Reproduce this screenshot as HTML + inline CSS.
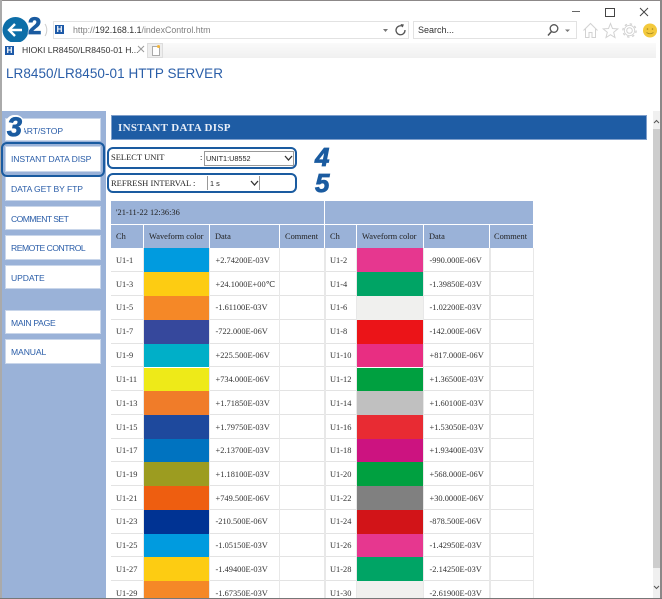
<!DOCTYPE html>
<html><head><meta charset="utf-8"><title>HIOKI LR8450</title>
<style>
html,body{margin:0;padding:0;background:#fff;width:662px;height:599px;overflow:hidden}
#p{position:relative;width:662px;height:599px;overflow:hidden;background:#fff;filter:blur(.25px)}
#p div,#p span.a,#p svg{position:absolute}
.t{font-family:"Liberation Sans",sans-serif;white-space:nowrap}
.s{font-family:"Liberation Serif",serif;white-space:nowrap;font-size:8.4px;color:#333;line-height:12px}
.btn{left:5px;width:96px;background:#fff;border:1px solid #c9d6ea;box-sizing:border-box;font-family:"Liberation Sans",sans-serif;font-size:8.6px;color:#2a5da8;line-height:24px;padding-left:5px;white-space:nowrap;letter-spacing:-.1px}
.row{left:111px;width:422px;height:22.8px;background:#fff;border-bottom:1px solid #e3e3e3}
.row .s{top:6.500px}
.row .c0{left:5px}.row .c1{left:33px;width:65px;top:0;height:23.8px}.row .c2{left:104.500px}
.row .c3{left:219px}.row .c4{left:246px;width:66px;top:0;height:23.8px}.row .c5{left:318.500px}
.vl{top:248px;width:1px;height:350px;background:#e8e8e8}
.h{background:#9ab2d8;height:23px}
.num{font-family:"Liberation Sans",sans-serif;font-weight:bold;font-style:italic;color:#1a5ba0;line-height:1;-webkit-text-stroke:.8px #1a5ba0}
.box{border:2px solid #1a5ba0;border-radius:6px;box-sizing:border-box}
.ic{background:#1e5aa8;width:9px;height:9px;color:#fff;font:bold 8px/9px "Liberation Sans",sans-serif;text-align:center}
</style></head><body><div id="p">
<!-- window frame -->
<div style="left:0;top:0;width:662px;height:1px;background:#8c8888"></div>
<div style="left:0;top:0;width:2px;height:599px;background:#aaa"></div>
<div style="left:660px;top:0;width:2px;height:599px;background:#8c8888"></div>
<div style="left:0;top:598px;width:662px;height:1px;background:#777"></div>

<!-- window controls -->
<div style="left:572px;top:11px;width:8px;height:1px;background:#666"></div>
<div style="left:605px;top:8px;width:8px;height:7px;border:1px solid #444"></div>
<svg style="left:639px;top:7px" width="10" height="10"><path d="M1 1L9 9M9 1L1 9" stroke="#444" stroke-width="1" fill="none"/></svg>

<!-- back + 2 -->
<svg style="left:1px;top:14px" width="50" height="30"><circle cx="14.500" cy="16" r="13" fill="#0d6ea8"/><path d="M8 16H21M14 10L8 16L14 22" stroke="#fff" stroke-width="2.400" fill="none"/><path d="M44 10a11 11 0 0 1 0 12" stroke="#ccc" fill="none"/></svg>
<div class="num" style="left:28px;top:15px;font-size:24px;font-style:normal;text-shadow:-1px 0 #fff,0 -1px #fff,0 1px #fff">2</div>

<!-- address bar -->
<div style="left:53px;top:21px;width:356px;height:18px;border:1px solid #e2e2e2;box-sizing:border-box"></div>
<div class="ic" style="left:55px;top:25px">H</div>
<div class="t" style="left:73px;top:24px;font-size:8.800px;line-height:12px;color:#808080">http://<span style="color:#333">192.168.1.1</span>/indexControl.htm</div>
<svg style="left:382px;top:22px" width="26" height="16"><path d="M1 7h5l-2.500 3z" fill="#777"/><path d="M21 4.500a4.500 4.500 0 1 0 2 3.500" stroke="#555" stroke-width="1.300" fill="none"/><path d="M18.500 2l3.500.5-1.500 3z" fill="#555"/></svg>

<!-- search -->
<div style="left:413px;top:21px;width:164px;height:18px;border:1px solid #e2e2e2;box-sizing:border-box"></div>
<div class="t" style="left:418px;top:24px;font-size:9px;line-height:12px;color:#333">Search...</div>
<svg style="left:546px;top:23px" width="30" height="14"><circle cx="8" cy="5.500" r="3.800" stroke="#555" stroke-width="1.300" fill="none"/><path d="M5.500 8.500L2 12.500" stroke="#555" stroke-width="1.500"/><path d="M19 6.500h5l-2.500 2.500z" fill="#777"/></svg>

<!-- tool icons -->
<svg style="left:582px;top:21px" width="58" height="18" fill="none" stroke="#d2d2d2" stroke-width="1">
<path d="M1.500 9.500L8.500 2.500L15.500 9.500M3.500 8V16.500H7V11.500H10V16.500H13.500V8"/>
<path d="M28.500 2.500l2 5 5.300.4-4.100 3.400 1.300 5.200-4.500-2.800-4.500 2.800 1.300-5.200-4.100-3.400 5.300-.4z"/>
<circle cx="47.500" cy="9.500" r="2.800"/><circle cx="47.500" cy="9.500" r="6.600" stroke-width="1.400" stroke-dasharray="2.400 2.780"/>
<circle cx="47.500" cy="9.500" r="5.200" stroke-width=".8"/>
</svg>
<svg style="left:642px;top:23px" width="16" height="16"><circle cx="8" cy="7.500" r="7" fill="#f3c93c"/><circle cx="5.500" cy="6" r=".8" fill="#a98a20"/><circle cx="10.500" cy="6" r=".8" fill="#a98a20"/><path d="M4.500 9.500q3.500 2.500 7 0" stroke="#a98a20" fill="none" stroke-width=".8"/></svg>

<!-- tab strip -->
<div style="left:148px;top:43px;width:508px;height:15px;background:linear-gradient(#fafafa,#f0f0f0)"></div>
<div style="left:2px;top:42px;width:145px;height:16px;background:#fff"></div>
<div class="ic" style="left:5px;top:46px">H</div>
<div class="t" style="left:22px;top:44px;font-size:8.600px;line-height:12px;color:#333">HIOKI LR8450/LR8450-01 H...</div>
<svg style="left:137px;top:45px" width="9" height="9"><path d="M1 1L7 7M7 1L1 7" stroke="#999" stroke-width="1"/></svg>
<div style="left:147px;top:43px;width:16px;height:15px;background:#eee;border:1px solid #ddd;box-sizing:border-box"></div>
<div style="left:152px;top:46px;width:6px;height:8px;background:#fff;border:1px solid #aaa"></div>
<div style="left:157px;top:45px;width:3px;height:3px;background:#f3b53c;border-radius:2px"></div>

<!-- page title -->
<div class="t" style="left:6px;top:66px;font-size:13.500px;line-height:16px;color:#2a5ea8;letter-spacing:.05px">LR8450/LR8450-01 HTTP SERVER</div>

<!-- sidebar -->
<div style="left:2px;top:111px;width:104px;height:487px;background:#9ab2d8"></div>
<div class="btn" style="top:118px;height:23px">START/STOP</div>
<div class="btn" style="top:146px;height:26px;line-height:25px">INSTANT DATA DISP</div>
<div class="btn" style="top:176px;height:25px">DATA GET BY FTP</div>
<div class="btn" style="top:206px;height:24px;letter-spacing:-.55px">COMMENT SET</div>
<div class="btn" style="top:235px;height:25px;letter-spacing:-.5px">REMOTE CONTROL</div>
<div class="btn" style="top:265px;height:24px">UPDATE</div>
<div class="btn" style="top:310px;height:24px;letter-spacing:-.3px">MAIN PAGE</div>
<div class="btn" style="top:339px;height:25px">MANUAL</div>
<div class="box" style="left:1px;top:142px;width:104px;height:35px"></div>
<div style="left:6px;top:115px;width:18px;height:24px;background:#fff;border-radius:8px"></div>
<div class="num" style="left:7px;top:114px;font-size:27px">3</div>

<!-- header bar -->
<div style="left:111px;top:115px;width:536px;height:25px;background:#1e5ca4;border:1px solid #7f9fcb;box-sizing:border-box"></div>
<div class="s" style="left:118px;top:122px;font-size:11px;font-weight:bold;color:#e8eef8;letter-spacing:.32px">INSTANT DATA DISP</div>

<!-- form -->
<div class="s" style="left:111px;top:151px;font-size:8.500px;color:#222">SELECT UNIT</div>
<div class="s" style="left:200px;top:151px;font-size:8.500px;color:#222">:</div>
<div style="left:204px;top:151px;width:90px;height:15px;border:1px solid #999;box-sizing:border-box"></div>
<div class="t" style="left:206px;top:152px;font-size:7.300px;line-height:13px;color:#222">UNIT1:U8552</div>
<svg style="left:284px;top:155px" width="9" height="7"><path d="M1 1L4.500 5L8 1" stroke="#333" stroke-width="1.300" fill="none"/></svg>
<div class="box" style="left:107px;top:147px;width:190px;height:22px"></div>

<div class="s" style="left:111px;top:177px;font-size:8.500px;color:#222">REFRESH INTERVAL :</div>
<div style="left:207px;top:176px;width:1px;height:14px;background:#999"></div>
<div style="left:259px;top:176px;width:1px;height:14px;background:#999"></div>
<div class="t" style="left:210px;top:177px;font-size:7.300px;line-height:13px;color:#222">1 s</div>
<svg style="left:250px;top:180px" width="9" height="7"><path d="M1 1L4.500 5L8 1" stroke="#333" stroke-width="1.300" fill="none"/></svg>
<div class="box" style="left:107px;top:173px;width:190px;height:20px"></div>

<div class="num" style="left:315px;top:144px;font-size:26px">4</div>
<div class="num" style="left:315px;top:170px;font-size:26px">5</div>

<!-- table head -->
<div class="h" style="left:111px;top:201px;width:213px"></div>
<div class="h" style="left:325px;top:201px;width:208px"></div>
<div class="s" style="left:116px;top:207px;color:#222">'21-11-22 12:36:36</div>
<div class="h" style="left:111px;top:225px;width:32px"></div>
<div class="h" style="left:144px;top:225px;width:65px"></div>
<div class="h" style="left:210px;top:225px;width:69px"></div>
<div class="h" style="left:280px;top:225px;width:44px"></div>
<div class="h" style="left:325px;top:225px;width:31px"></div>
<div class="h" style="left:357px;top:225px;width:66px"></div>
<div class="h" style="left:424px;top:225px;width:65px"></div>
<div class="h" style="left:490px;top:225px;width:43px"></div>
<div class="s" style="left:116px;top:231px;color:#222">Ch</div>
<div class="s" style="left:149px;top:231px;color:#222">Waveform color</div>
<div class="s" style="left:215px;top:231px;color:#222">Data</div>
<div class="s" style="left:285px;top:231px;color:#222">Comment</div>
<div class="s" style="left:330px;top:231px;color:#222">Ch</div>
<div class="s" style="left:362px;top:231px;color:#222">Waveform color</div>
<div class="s" style="left:429px;top:231px;color:#222">Data</div>
<div class="s" style="left:494px;top:231px;color:#222">Comment</div>

<!-- rows -->
<div class="row" style="top:248.300px"><div class="s c0">U1-1</div><div class="c1" style="background:#009bdf"></div><div class="s c2">+2.74200E-03V</div><div class="s c3">U1-2</div><div class="c4" style="background:#e6378f"></div><div class="s c5">-990.000E-06V</div></div>
<div class="row" style="top:272.100px"><div class="s c0">U1-3</div><div class="c1" style="background:#fdcc12"></div><div class="s c2">+24.1000E+00℃</div><div class="s c3">U1-4</div><div class="c4" style="background:#00a465"></div><div class="s c5">-1.39850E-03V</div></div>
<div class="row" style="top:295.900px"><div class="s c0">U1-5</div><div class="c1" style="background:#f58827"></div><div class="s c2">-1.61100E-03V</div><div class="s c3">U1-6</div><div class="c4" style="background:#f0f0ee"></div><div class="s c5">-1.02200E-03V</div></div>
<div class="row" style="top:319.800px"><div class="s c0">U1-7</div><div class="c1" style="background:#36489c"></div><div class="s c2">-722.000E-06V</div><div class="s c3">U1-8</div><div class="c4" style="background:#eb1418"></div><div class="s c5">-142.000E-06V</div></div>
<div class="row" style="top:343.600px"><div class="s c0">U1-9</div><div class="c1" style="background:#00afc8"></div><div class="s c2">+225.500E-06V</div><div class="s c3">U1-10</div><div class="c4" style="background:#e82e82"></div><div class="s c5">+817.000E-06V</div></div>
<div class="row" style="top:367.500px"><div class="s c0">U1-11</div><div class="c1" style="background:#eeea18"></div><div class="s c2">+734.000E-06V</div><div class="s c3">U1-12</div><div class="c4" style="background:#00a040"></div><div class="s c5">+1.36500E-03V</div></div>
<div class="row" style="top:391.300px"><div class="s c0">U1-13</div><div class="c1" style="background:#f07c29"></div><div class="s c2">+1.71850E-03V</div><div class="s c3">U1-14</div><div class="c4" style="background:#c0c0c0"></div><div class="s c5">+1.60100E-03V</div></div>
<div class="row" style="top:415.100px"><div class="s c0">U1-15</div><div class="c1" style="background:#1e499d"></div><div class="s c2">+1.79750E-03V</div><div class="s c3">U1-16</div><div class="c4" style="background:#e82b33"></div><div class="s c5">+1.53050E-03V</div></div>
<div class="row" style="top:438.600px"><div class="s c0">U1-17</div><div class="c1" style="background:#0073c0"></div><div class="s c2">+2.13700E-03V</div><div class="s c3">U1-18</div><div class="c4" style="background:#cc1380"></div><div class="s c5">+1.93400E-03V</div></div>
<div class="row" style="top:462.200px"><div class="s c0">U1-19</div><div class="c1" style="background:#9c9c20"></div><div class="s c2">+1.18100E-03V</div><div class="s c3">U1-20</div><div class="c4" style="background:#00a040"></div><div class="s c5">+568.000E-06V</div></div>
<div class="row" style="top:486px"><div class="s c0">U1-21</div><div class="c1" style="background:#ee5e10"></div><div class="s c2">+749.500E-06V</div><div class="s c3">U1-22</div><div class="c4" style="background:#808080"></div><div class="s c5">+30.0000E-06V</div></div>
<div class="row" style="top:509.800px"><div class="s c0">U1-23</div><div class="c1" style="background:#003393"></div><div class="s c2">-210.500E-06V</div><div class="s c3">U1-24</div><div class="c4" style="background:#d21418"></div><div class="s c5">-878.500E-06V</div></div>
<div class="row" style="top:533.500px"><div class="s c0">U1-25</div><div class="c1" style="background:#009bdf"></div><div class="s c2">-1.05150E-03V</div><div class="s c3">U1-26</div><div class="c4" style="background:#e6378f"></div><div class="s c5">-1.42950E-03V</div></div>
<div class="row" style="top:557.200px"><div class="s c0">U1-27</div><div class="c1" style="background:#fdcc12"></div><div class="s c2">-1.49400E-03V</div><div class="s c3">U1-28</div><div class="c4" style="background:#00a465"></div><div class="s c5">-2.14250E-03V</div></div>
<div class="row" style="top:581px;height:17px;border:0"><div class="s c0">U1-29</div><div class="c1" style="background:#f58827;height:17px"></div><div class="s c2">-1.67350E-03V</div><div class="s c3">U1-30</div><div class="c4" style="background:#f0f0ee;height:17px"></div><div class="s c5">-2.61900E-03V</div></div>

<div class="vl" style="left:143px"></div>
<div class="vl" style="left:209px"></div>
<div class="vl" style="left:279px"></div>
<div class="vl" style="left:324px;width:2px"></div>
<div class="vl" style="left:356px"></div>
<div class="vl" style="left:423px"></div>
<div class="vl" style="left:489px;width:2px"></div>
<div class="vl" style="left:533px"></div>

<!-- scrollbar -->
<div style="left:653px;top:111px;width:7px;height:487px;background:#f0f0f0"></div>
<div style="left:653px;top:129px;width:7px;height:439px;background:#cdcdcd"></div>
<svg style="left:653px;top:119px" width="7" height="5"><path d="M1 4L3.500 1.500L6 4" stroke="#555" fill="none"/></svg>
<svg style="left:653px;top:585px" width="7" height="5"><path d="M1 1L3.500 3.500L6 1" stroke="#555" fill="none"/></svg>
</div></body></html>
